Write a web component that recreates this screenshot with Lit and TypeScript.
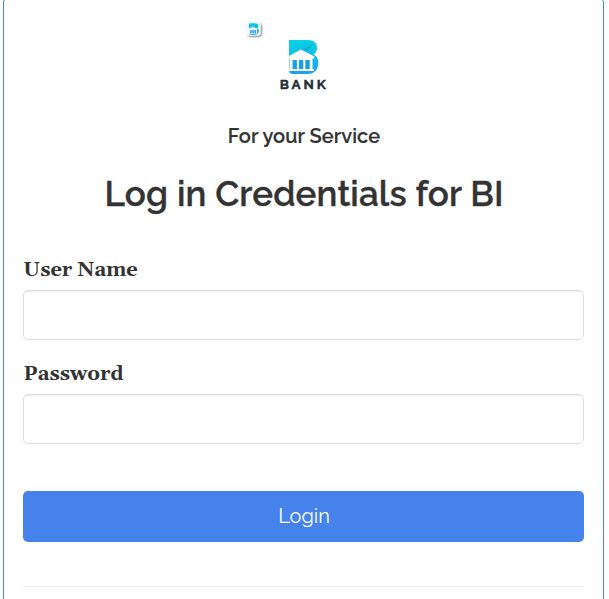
import { LitElement, html, css } from "lit";
import { customElement } from "lit/decorators.js";

@customElement("bank-logo")
class BankLogo extends LitElement {
  static styles = css`
    :host { display: block; width: 609px; height: 100px; }
    svg { display: block; }
    .word {
      font: 700 13.5px Raleway, "Liberation Sans", sans-serif; fill: #202d36;
      stroke: #202d36; stroke-width: 0.4px; letter-spacing: 2.9px;
    }
  `;
  render() {
    return html`<svg width="609" height="100" viewBox="0 0 609 100">
      <defs>
        <linearGradient id="g" x1="0" y1="0" x2="0" y2="1">
          <stop offset="0" stop-color="#08d2e4" />
          <stop offset="1" stop-color="#1aa2f2" />
        </linearGradient>
        <filter id="s" x="-30%" y="-30%" width="180%" height="180%">
          <feDropShadow dx="1" dy="1" stdDeviation="0.8" flood-color="#000" flood-opacity=".65" />
        </filter>
        <g id="b">
          <path fill="url(#g)" d="M289 40H308C314 40 317 43 317 48C317 51 316 53 313.500 54.500C317 56 318.300 59 318.300 63C318.300 70 314 74 308 74H293Q289 74 289 70Z" />
          <path fill="#0793b8" opacity=".4" d="M302 50L315 43L306 52Z" />
          <path fill="#fff" d="M288 56.500L301 49.500L314.300 56.500V58.500H312.500V69H314V71H288V69H289.500V58.500H288Z" />
          <path fill="#1a9fe0" d="M292.500 60H296.900V69H292.500ZM298.900 60H303.300V69H298.900ZM305.300 60H309.700V69H305.300Z" />
        </g>
      </defs>
      <rect x="247" y="22.500" width="13.500" height="13" rx="2.500" fill="#fff" filter="url(#s)" />
      <use href="#b" transform="translate(150.700 9.700) scale(.34)" />
      <use href="#b" />
      <text class="word" x="279.700" y="88.700">BANK</text>
    </svg>`;
  }
}

@customElement("app-root")
class AppRoot extends LitElement {
  static styles = css`
    :host { display: block; height: 599px; overflow: hidden; background: #fff; color: #333; }
    * { box-sizing: border-box; }
    .panel {
      width: 601px; height: 640px; margin: -2px 0 0 3px; padding: 1px 19px 0;
      border: 1px solid #4582ec; border-radius: 4px;
      display: flex; flex-direction: column;
    }
    bank-logo { margin-left: -23px; flex: none; }
    h4, h1 { margin: 0; text-align: center; white-space: nowrap; font-family: Raleway, Lato, sans-serif; font-weight: 600; }
    h4 { margin-top: 24px; padding-left: 1px; font-size: 20px; line-height: 24px; letter-spacing: 0.06px; -webkit-text-stroke: 0.15px #333; }
    h1 { margin-top: 26px; padding-left: 1px; font-size: 35px; line-height: 40px; letter-spacing: 0.12px; -webkit-text-stroke: 0.3px #333; }
    label { font: 700 20px/24px Gelasio, "Liberation Serif", serif; padding-left: 0.5px; }
    .user { margin-top: 44px; }
    .pass { margin-top: 22px; }
    input {
      display: block; width: 561px; height: 50px; margin: 8px 0 0; padding: 8px 12px;
      border: 1px solid #ddd; border-radius: 5px; background: #fff; outline: none;
      box-shadow: inset 0 1px 1px rgba(0, 0, 0, .075); flex: none;
    }
    button {
      width: 561px; height: 51px; margin: 47px 0 0; padding: 0 0 2px 1px; border: 0; border-radius: 5px;
      background: #4582ec; color: #fff; font: 400 20px Raleway, Lato, sans-serif; flex: none;
    }
    hr { width: 561px; margin: 44px 0 0; border: 0; border-top: 1px solid #eee; flex: none; }
  `;
  render() {
    return html`<form class="panel">
      <bank-logo></bank-logo>
      <h4>For your Service</h4>
      <h1>Log in Credentials for BI</h1>
      <label class="user" for="u">User Name</label>
      <input id="u" type="text" />
      <label class="pass" for="p">Password</label>
      <input id="p" type="password" />
      <button type="button">Login</button>
      <hr />
    </form>`;
  }
}
